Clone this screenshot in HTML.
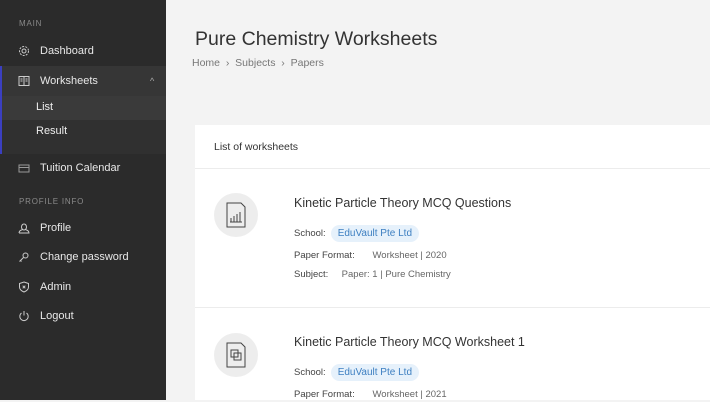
<!DOCTYPE html>
<html><head><style>
*{margin:0;padding:0;box-sizing:border-box}
body{width:710px;height:400px;overflow:hidden;background:#f3f3f3;font-family:"Liberation Sans",sans-serif;position:relative}
.sb{position:absolute;left:0;top:0;width:166px;height:400px;background:#2b2b2b;color:#e8e8e8;font-size:11px}
.sb .lbl{position:absolute;left:19px;font-size:8px;color:#8a8a8a;letter-spacing:.8px}
.sb .it{position:absolute;left:0;width:166px;height:28px;line-height:28px;padding-left:40px}
.sb svg{position:absolute;left:18px;top:8px}
.t{position:absolute;white-space:nowrap}
.card{position:absolute;left:195px;top:125px;width:515px;height:275px;background:#fff}
.badge{display:inline-block;background:#e6f1fb;color:#3d7fc1;border-radius:9px;padding:0 7px;height:17px;line-height:17px;font-size:10px;margin-left:5px}
.k{color:#444;font-size:9.5px}
.v{color:#666;font-size:9.5px}
.ic{position:absolute;left:19px;width:44px;height:44px;border-radius:50%;background:#ededed}
</style></head><body>
<div class="sb">
<div class="lbl" style="top:19px">MAIN</div>
<div class="it" style="top:37px"><svg width="12" height="12" viewBox="0 0 12 12" fill="none" stroke="#ccc" stroke-width="1"><circle cx="6" cy="6" r="2"/><circle cx="6" cy="6" r="4.5" stroke-dasharray="2 1.2"/></svg>Dashboard</div>
<div style="position:absolute;left:0;top:66px;width:166px;height:88px;background:#303030;border-left:2px solid #3b3fc0"></div>
<div style="position:absolute;left:2px;top:66px;width:164px;height:30px;background:#363636"></div>
<div style="position:absolute;left:2px;top:96px;width:164px;height:24px;background:#3a3a3a"></div>
<div class="it" style="top:67px"><svg width="12" height="12" viewBox="0 0 12 12" fill="none" stroke="#ccc" stroke-width="1"><rect x="1" y="1.5" width="10" height="9"/><line x1="6" y1="1.5" x2="6" y2="10.5"/><line x1="2.5" y1="4" x2="4.5" y2="4"/><line x1="2.5" y1="6" x2="4.5" y2="6"/><line x1="7.5" y1="4" x2="9.5" y2="4"/><line x1="7.5" y1="6" x2="9.5" y2="6"/></svg>Worksheets<span style="position:absolute;left:150px;top:0;font-size:9px;color:#aaa">^</span></div>
<div class="t" style="left:36px;top:101px;color:#eee;font-size:11px">List</div>
<div class="t" style="left:36px;top:125px;color:#eee;font-size:11px">Result</div>
<div class="it" style="top:154px"><svg width="12" height="12" viewBox="0 0 12 12" fill="none" stroke="#999" stroke-width="1"><rect x="1" y="3" width="10" height="7"/><line x1="1" y1="5.5" x2="11" y2="5.5"/></svg>Tuition Calendar</div>
<div class="lbl" style="top:197px">PROFILE INFO</div>
<div class="it" style="top:214px"><svg width="12" height="12" viewBox="0 0 12 12" fill="none" stroke="#ccc" stroke-width="1"><path d="M3.5 5a2.5 3 0 1 0 5 0a2.5 3 0 1 0-5 0M1 11h10c0-2-2-3-3.5-3.5M1 11c0-2 2-3 3.5-3.5"/></svg>Profile</div>
<div class="it" style="top:243px"><svg width="12" height="12" viewBox="0 0 12 12" fill="none" stroke="#ccc" stroke-width="1"><circle cx="7.5" cy="4.5" r="2.5"/><path d="M5.5 6.5L1.5 10.5M2.5 9.5l1 1"/></svg>Change password</div>
<div class="it" style="top:273px"><svg width="12" height="12" viewBox="0 0 12 12" fill="none" stroke="#ccc" stroke-width="1"><path d="M6 1l4.5 1.5v3.5c0 2.5-2 4-4.5 5c-2.5-1-4.5-2.5-4.5-5V2.5z"/><path d="M4.7 4.7l2.6 2.6M7.3 4.7l-2.6 2.6"/></svg>Admin</div>
<div class="it" style="top:302px"><svg width="12" height="12" viewBox="0 0 12 12" fill="none" stroke="#ccc" stroke-width="1"><path d="M3.5 3a4.2 4.2 0 1 0 5 0"/><line x1="6" y1="1" x2="6" y2="5.5"/></svg>Logout</div>
</div>
<div class="t" style="left:195px;top:28px;font-size:19.5px;color:#333">Pure Chemistry Worksheets</div>
<div class="t" style="left:192px;top:57px;font-size:10.5px;color:#777">Home &nbsp;›&nbsp; Subjects &nbsp;›&nbsp; Papers</div>
<div class="card">
<div class="t" style="left:19px;top:16px;font-size:10.5px;color:#333">List of worksheets</div>
<div style="position:absolute;left:0;top:43px;width:515px;height:1px;background:#ececec"></div>
<div class="ic" style="top:68px"><svg width="44" height="44" viewBox="0 0 44 44" fill="none" stroke="#444" stroke-width="1"><path d="M13 10h14l4 4v20H13z"/><path d="M17 29v-4M20 29v-6M23 29v-8M26 29v-10M16 29h12"/></svg></div>
<div class="t" style="left:99px;top:71px;font-size:12.5px;color:#333">Kinetic Particle Theory MCQ Questions</div>
<div class="t" style="left:99px;top:98px"><span class="k">School:</span><span class="badge">EduVault Pte Ltd</span></div>
<div class="t" style="left:99px;top:120px"><span class="k">Paper Format:</span>&nbsp;&nbsp;&nbsp;&nbsp;<span class="v">Worksheet | 2020</span></div>
<div class="t" style="left:99px;top:139px"><span class="k">Subject:</span>&nbsp;&nbsp;&nbsp;<span class="v">Paper: 1 | Pure Chemistry</span></div>
<div style="position:absolute;left:0;top:182px;width:515px;height:1px;background:#ececec"></div>
<div class="ic" style="top:208px"><svg width="44" height="44" viewBox="0 0 44 44" fill="none" stroke="#444" stroke-width="1"><path d="M13 10h14l4 4v20H13z"/><rect x="17" y="17" width="7" height="7"/><rect x="20" y="20" width="7" height="7"/></svg></div>
<div class="t" style="left:99px;top:210px;font-size:12.5px;color:#333">Kinetic Particle Theory MCQ Worksheet 1</div>
<div class="t" style="left:99px;top:237px"><span class="k">School:</span><span class="badge">EduVault Pte Ltd</span></div>
<div class="t" style="left:99px;top:259px"><span class="k">Paper Format:</span>&nbsp;&nbsp;&nbsp;&nbsp;<span class="v">Worksheet | 2021</span></div>
</div>
</body></html>
